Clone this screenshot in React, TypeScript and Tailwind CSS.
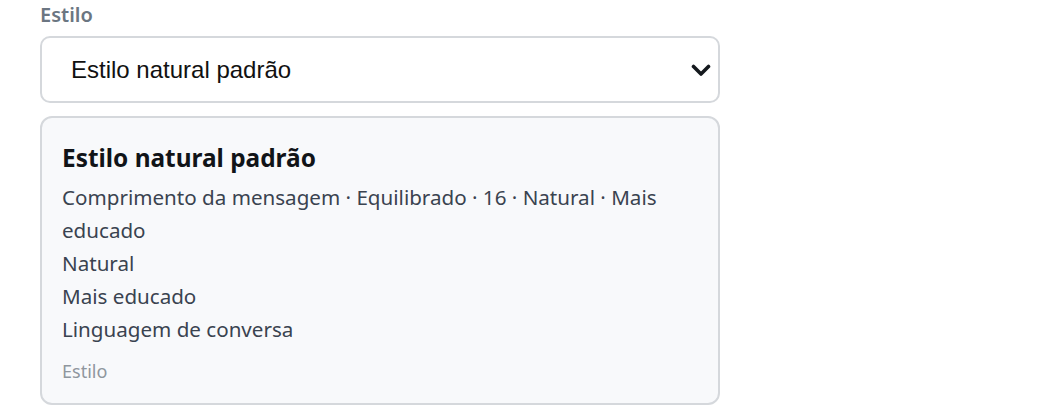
import { useState } from 'react';

const font = { fontFamily: '"Noto Sans", "Open Sans", sans-serif' };

export default function App() {
  const [style, setStyle] = useState('natural');

  return (
    <div className="min-h-screen bg-white" style={font}>
      <div className="ml-10 w-[680px]">
        {/* Style picker */}
        <label
          htmlFor="style-select"
          className="block text-[20px] leading-[30px] font-semibold text-[#6b7682] mb-1.5"
        >
          Estilo
        </label>
        <div className="relative">
          <select
            id="style-select"
            value={style}
            onChange={(e) => setStyle(e.target.value)}
            className="block w-full h-[67px] appearance-none rounded-[10px] border-2 border-[#d5d8dc] bg-white pl-[29px] pr-12 text-[24px] text-[#111111] outline-none"
            style={{ fontFamily: '"Liberation Sans", Arial, sans-serif' }}
          >
            <option value="natural">Estilo natural padrão</option>
          </select>
          <svg
            className="pointer-events-none absolute right-[9px] top-[28px]"
            width="20"
            height="13"
            viewBox="0 0 20 13"
            fill="none"
          >
            <path
              d="M2.5 2.5 L10 10 L17.5 2.5"
              stroke="#15191e"
              strokeWidth="3.6"
              strokeLinecap="round"
              strokeLinejoin="round"
            />
          </svg>
        </div>

        {/* Preview card */}
        <div className="mt-[13px] rounded-xl border-2 border-[#d5d8dc] bg-[#f8f9fb] px-5 pt-6 pb-5">
          <h3 className="text-[24.4px] leading-8 font-bold text-[#111418]">
            Estilo natural padrão
          </h3>
          <div className="mt-[7px] text-[20.6px] leading-[33px] text-[#3a4350]">
            <p>Comprimento da mensagem · Equilibrado · 16 · Natural · Mais educado</p>
            <p>Natural</p>
            <p>Mais educado</p>
            <p>Linguagem de conversa</p>
          </div>
          <div className="mt-[13px] text-[18px] leading-6 text-[#8f969e]">Estilo</div>
        </div>
      </div>
    </div>
  );
}
